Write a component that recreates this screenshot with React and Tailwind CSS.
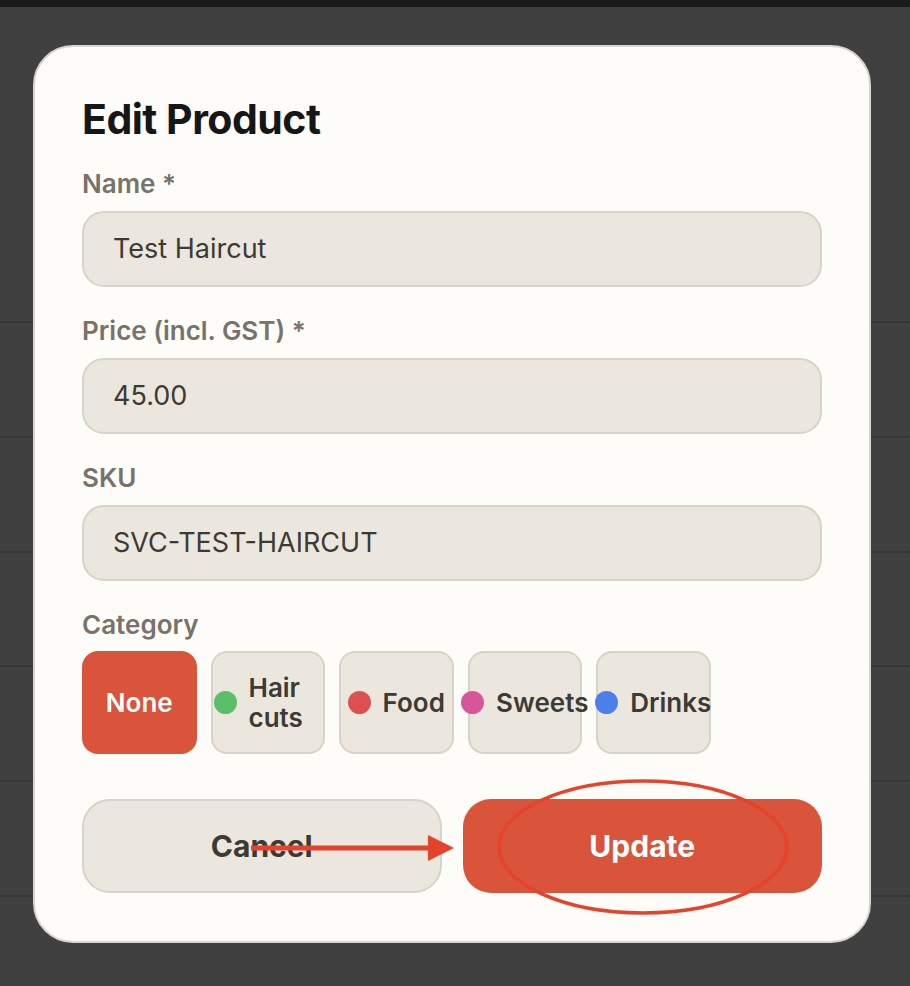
import React from "react";

const categories = [
  { name: "Hair cuts", dot: "bg-[#5bbf68]" },
  { name: "Food", dot: "bg-[#dc5150]" },
  { name: "Sweets", dot: "bg-[#d9559b]" },
  { name: "Drinks", dot: "bg-[#4c7fe9]" },
];

const Field = ({ label, value }) => (
  <div className="mt-[28px]">
    <label className="block text-[26px] leading-[32px] font-semibold text-[#77726a]">
      {label}
    </label>
    <div className="mt-[11px] h-[76px] rounded-[22px] border-2 border-[#d7d3c9] bg-[#ebe7df] px-[29px] flex items-center text-[27px] text-[#3c3a33]">
      {value}
    </div>
  </div>
);

const App = () => {
  return (
    <div
      className="relative w-[910px] h-[986px] overflow-hidden bg-[#404040]"
      style={{ fontFamily: "Inter, 'Noto Sans', sans-serif" }}
    >
      {/* page behind the modal */}
      <div className="h-[7px] bg-[#1b1b1b]" />
      <div className="h-[314px]" />
      {[0, 1, 2, 3, 4, 5].map((i) => (
        <div key={i} className="h-[114.8px] border-t-2 border-[#373737]" />
      ))}

      {/* modal */}
      <div className="absolute inset-0 pl-[33px] pt-[45px]">
        <div className="relative w-[838px] h-[898px] rounded-[40px] border-2 border-[#d8d5ce] bg-[#fdfcf8] px-[47px] pt-[47px]">
          <h2 className="text-[41px] leading-[50px] font-bold tracking-[-0.5px] text-[#161616]">
            Edit Product
          </h2>

          <div className="-mt-[4px]">
            <Field label="Name *" value="Test Haircut" />
          </div>
          <Field label="Price (incl. GST) *" value="45.00" />
          <Field label="SKU" value="SVC-TEST-HAIRCUT" />

          <div className="mt-[28px]">
            <label className="block text-[26px] leading-[32px] font-semibold text-[#77726a]">
              Category
            </label>
            <div className="mt-[10px] flex gap-[14px]">
              <div className="w-[114.5px] h-[103px] rounded-[16px] bg-[#d9543a] flex items-center justify-center text-[26px] font-semibold text-white">
                None
              </div>
              {categories.map((c) => (
                <div
                  key={c.name}
                  className="w-[114.5px] h-[103px] rounded-[16px] border-2 border-[#d7d3c9] bg-[#ebe7df] px-[1px] flex items-center justify-center gap-[12px]"
                >
                  <span className={`shrink-0 w-[23px] h-[23px] rounded-full ${c.dot}`} />
                  <span className="text-[26px] leading-[30px] font-semibold text-[#3c3a33]">
                    {c.name}
                  </span>
                </div>
              ))}
            </div>
          </div>

          <div className="mt-[45px] grid grid-cols-2 gap-[21px]">
            <button className="h-[94px] rounded-[28px] border-2 border-[#d7d3c9] bg-[#ebe7df] text-[30px] font-bold text-[#3c3a33]">
              Cancel
            </button>
            <button className="h-[94px] rounded-[28px] bg-[#d9543a] text-[30px] font-bold text-white">
              Update
            </button>
          </div>
        </div>
      </div>

      {/* annotation drawn over the screenshot */}
      <svg className="absolute inset-0 pointer-events-none" width="910" height="986">
        <line x1="251" y1="848" x2="432" y2="848" stroke="#e5432b" strokeWidth="5" />
        <polygon points="428,835 454,848 428,861" fill="#e5432b" />
        <ellipse cx="643" cy="847" rx="144" ry="66" fill="none" stroke="#e5432b" strokeWidth="3.5" />
      </svg>
    </div>
  );
};

export default App;
